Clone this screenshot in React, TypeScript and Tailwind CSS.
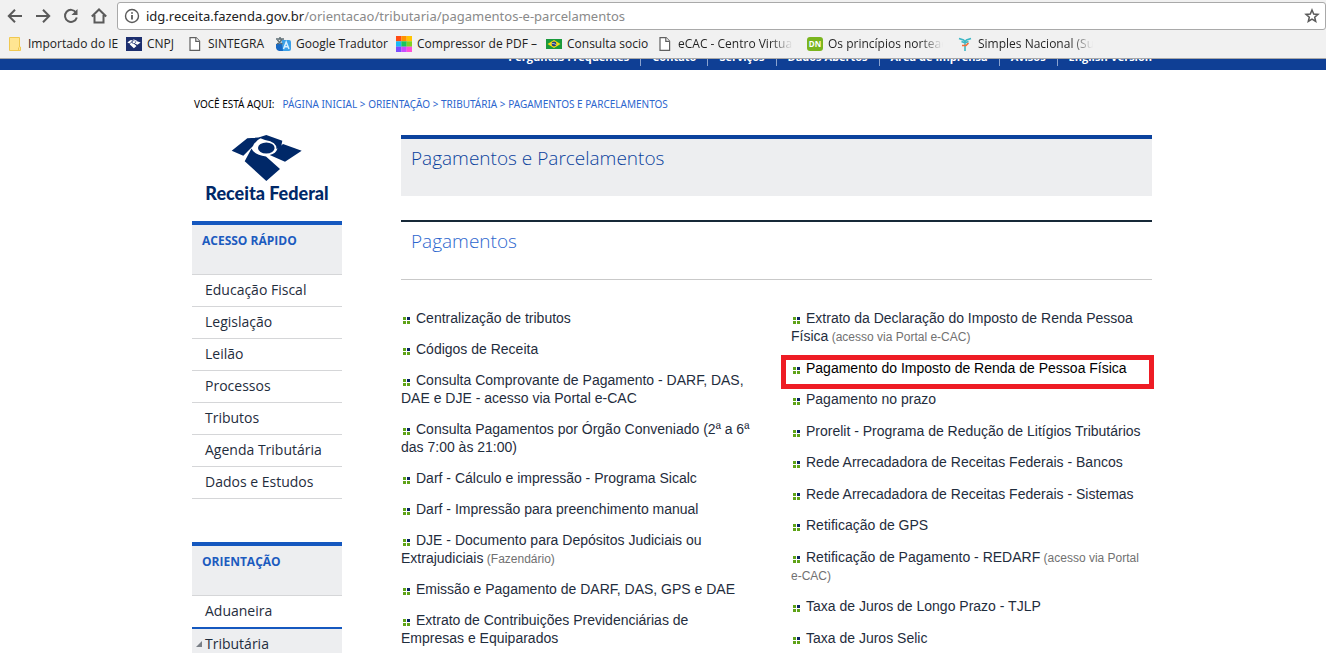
import type { ReactNode } from "react";

const sections = [
    "Perguntas Frequentes",
    "Contato",
    "Serviços",
    "Dados Abertos",
    "Área de Imprensa",
    "Avisos",
    "English Version",
];

const quickLinks = [
    "Educação Fiscal",
    "Legislação",
    "Leilão",
    "Processos",
    "Tributos",
    "Agenda Tributária",
    "Dados e Estudos",
];

type Service = { label: string; note?: string; highlighted?: boolean };

const leftServices: Service[] = [
    { label: "Centralização de tributos" },
    { label: "Códigos de Receita" },
    { label: "Consulta Comprovante de Pagamento - DARF, DAS, DAE e DJE - acesso via Portal e-CAC" },
    { label: "Consulta Pagamentos por Órgão Conveniado (2ª a 6ª das 7:00 às 21:00)" },
    { label: "Darf - Cálculo e impressão - Programa Sicalc" },
    { label: "Darf - Impressão para preenchimento manual" },
    { label: "DJE - Documento para Depósitos Judiciais ou Extrajudiciais", note: "(Fazendário)" },
    { label: "Emissão e Pagamento de DARF, DAS, GPS e DAE" },
    { label: "Extrato de Contribuições Previdenciárias de Empresas e Equiparados" },
];

const rightServices: Service[] = [
    { label: "Extrato da Declaração do Imposto de Renda Pessoa Física", note: "(acesso via Portal e-CAC)" },
    { label: "Pagamento do Imposto de Renda de Pessoa Física", highlighted: true },
    { label: "Pagamento no prazo" },
    { label: "Prorelit - Programa de Redução de Litígios Tributários" },
    { label: "Rede Arrecadadora de Receitas Federais - Bancos" },
    { label: "Rede Arrecadadora de Receitas Federais - Sistemas" },
    { label: "Retificação de GPS" },
    { label: "Retificação de Pagamento - REDARF", note: "(acesso via Portal e-CAC)" },
    { label: "Taxa de Juros de Longo Prazo - TJLP" },
    { label: "Taxa de Juros Selic" },
];

function ToolButton({ label, children }: { label: string; children: ReactNode }) {
    return (
        <button type="button" aria-label={label} className="flex size-4 items-center justify-center">
            <svg viewBox="0 0 16 16" className="size-4" fill="none" stroke="#5a5a5a" strokeWidth="2">
                {children}
            </svg>
        </button>
    );
}

function PageIcon() {
    return (
        <svg viewBox="0 0 16 16" className="size-4" fill="#fff" stroke="#5f5f5f" strokeWidth="1.2">
            <path d="M3 1.6h6l3.6 3.6v9.2H3z" />
            <path d="M8.800 1.600v3.800h3.800" />
        </svg>
    );
}

function FolderIcon() {
    return (
        <svg viewBox="0 0 16 16" className="size-4">
            <path d="M2.500 1.500h10v9.500h1v3.500h-11z" fill="#ffe592" stroke="#f0c850" />
            <path d="M11.500 11.500v3" stroke="#f0c850" />
        </svg>
    );
}

// The eagle emblem, shared by the site logo and the CNPJ bookmark.
function EagleShapes() {
    return (
        <>
            <path d="M.7 15.700L16.300 3.300 31 2.300Q24 6 22 11L12.300 20.700z" />
            <path d="M27.500 2.500L35.300 0l16 5.700-1.300 6.800-4.500 1.500Q46 7 34 5z" />
            <ellipse cx="35.300" cy="13" rx="8.300" ry="5.600" />
            <path d="M38.700 20Q45 18.500 46.500 13.500L52 9l18.700 6.700L54 26.700z" />
            <path d="M20.500 13.500Q23 20 35 21.500L49 34 35.300 46 13.700 26.300z" />
        </>
    );
}

function ReceitaIcon() {
    return (
        <svg viewBox="0 0 16 16" className="size-4">
            <path d="M0 1h16v14H0z" fill="#1d2f6f" />
            <g fill="#fff" transform="translate(1.200 3.600) scale(.19)">
                <EagleShapes />
            </g>
        </svg>
    );
}

function TranslateIcon() {
    return (
        <svg viewBox="0 0 16 16" className="size-4">
            <path d="M1 8l6-1 3 8H4a4 4 0 0 1-3-3z" fill="#1769c4" />
            <path d="M6.500 4H14a2 2 0 0 1 2 2v7a2 2 0 0 1-2 2H8z" fill="#3aa0e8" />
            <path d="M1 3h8M5 1v2M2 8c3-1 4-3 5-5M2.500 4c1 2 2 3 5 4" stroke="#5e6e74" strokeWidth="1.500" fill="none" />
            <path d="M8.500 13l2.700-7 2.800 7M9.500 10.800h3.500" stroke="#d9f0ff" strokeWidth="1.500" fill="none" />
        </svg>
    );
}

function CompressorIcon() {
    const tiles = [
        "#ff4b12", "#ff9100", "#ffc400",
        "#18b9f5", "#16c65c", "#7ed321",
        "#7c4dff", "#c84bff", "#ff4fd8",
    ];
    return (
        <svg viewBox="0 0 16 16" className="size-4">
            {tiles.map((fill, i) => (
                <rect key={fill} x={(i % 3) * 5.33} y={Math.floor(i / 3) * 5.33} width="5.400" height="5.400" fill={fill} />
            ))}
        </svg>
    );
}

function BrazilIcon() {
    return (
        <svg viewBox="0 0 16 16" className="size-4">
            <path d="M0 3h16v10H0z" fill="#1a9a3c" />
            <path d="M8 4l6.500 4L8 12 1.500 8z" fill="#f7d917" />
            <circle cx="8" cy="8" r="2.400" fill="#24407f" />
            <path d="M5.800 7.500q2.500-.3 4.300 1.200" stroke="#fff" strokeWidth=".6" fill="none" />
        </svg>
    );
}

function NormasIcon() {
    return (
        <span className="flex h-3.5 w-4 items-center justify-center rounded-[3px] bg-[#7ab51d] text-[8px] font-bold text-white">
            DN
        </span>
    );
}

function SimplesIcon() {
    return (
        <svg viewBox="0 0 16 16" className="size-4" fill="none">
            <path d="M2 2.500l4.500 1.500L8 5.500 9.500 4 14 2.500M4.500 5.500L8 7l3.500-1.500M8 5v10" stroke="#3bb6c4" strokeWidth="1.600" />
            <path d="M5 9.500h4l2.500-2.500" stroke="#f2703a" strokeWidth="1.600" />
        </svg>
    );
}

const bookmarks = [
    { label: "Importado do IE", icon: <FolderIcon />, width: "w-[119px]" },
    { label: "CNPJ", icon: <ReceitaIcon />, width: "w-[61px]" },
    { label: "SINTEGRA", icon: <PageIcon />, width: "w-[88px]" },
    { label: "Google Tradutor", icon: <TranslateIcon />, width: "w-[121px]" },
    { label: "Compressor de PDF –", icon: <CompressorIcon />, width: "w-[150px]" },
    { label: "Consulta socio", icon: <BrazilIcon />, width: "w-[111px]" },
    { label: "eCAC - Centro Virtual", icon: <PageIcon />, width: "w-[150px]", faded: true },
    { label: "Os princípios norteadores", icon: <NormasIcon />, width: "w-[150px]", faded: true },
    { label: "Simples Nacional (Super", icon: <SimplesIcon />, width: "w-[150px]", faded: true },
];

function BrowserChrome() {
    return (
        <header className="shrink-0 border-b border-[#a9a9a9] bg-[#f1f1f1]">
            <div className="flex items-center gap-2.5 pt-0.5 pl-[7px]">
                <div className="flex gap-3">
                    <ToolButton label="Voltar">
                        <path d="M15 8H2M8 1.800L1.800 8 8 14.200" />
                    </ToolButton>
                    <ToolButton label="Avançar">
                        <path d="M1 8h13M8 1.800L14.200 8 8 14.200" />
                    </ToolButton>
                    <ToolButton label="Recarregar">
                        <path d="M13 4.500A6 6 0 1 0 13.800 9.500" />
                        <path d="M14.500 1v6h-6z" fill="#5a5a5a" stroke="none" />
                    </ToolButton>
                    <ToolButton label="Página inicial">
                        <path d="M.8 8.500L8 1.500l7.200 7M3.500 7v7.500h9V7" />
                    </ToolButton>
                </div>
                <div className="flex h-7 min-w-0 flex-1 items-center gap-1.5 rounded-[3px] border border-[#a9a9a9] bg-white pr-[5px] pl-1.5">
                    <svg viewBox="0 0 16 16" className="size-4 shrink-0" fill="none" stroke="#5a5a5a" strokeWidth="1.400">
                        <circle cx="8" cy="8" r="6.500" />
                        <path d="M8 7v4.500M8 4.200v1.600" strokeWidth="1.800" />
                    </svg>
                    <a
                        href="#"
                        className="min-w-0 flex-1 truncate font-['Noto_Sans',sans-serif] text-[13px] leading-5 text-[#8a8a8a]"
                    >
                        <span className="text-[#222]">idg.receita.fazenda.gov.br</span>
                        /orientacao/tributaria/pagamentos-e-parcelamentos
                    </a>
                    <button type="button" aria-label="Adicionar aos favoritos">
                        <svg viewBox="0 0 16 16" className="size-4" fill="none" stroke="#5a5a5a" strokeWidth="1.500">
                            <path d="M8 2l1.700 4 4.300.4-3.300 2.800 1 4.300L8 11.200l-3.700 2.300 1-4.300L2 6.400 6.300 6z" />
                        </svg>
                    </button>
                </div>
            </div>
            <nav className="flex h-7 items-center pl-[7px]">
                {bookmarks.map(({ label, icon, width, faded }) => (
                    <a key={label} href="#" className={`flex shrink-0 items-center gap-[5px] text-xs text-[#222] ${width}`}>
                        <span className="flex size-4 shrink-0 items-center">{icon}</span>
                        <span
                            className={
                                faded
                                    ? "mr-3.5 overflow-hidden bg-linear-to-r from-[#222] from-80% to-transparent bg-clip-text whitespace-nowrap text-transparent"
                                    : "whitespace-nowrap"
                            }
                        >
                            {label}
                        </span>
                    </a>
                ))}
            </nav>
        </header>
    );
}

// Only the lower edge of the section menu shows under the browser bar.
function SectionBar() {
    return (
        <nav className="flex h-[11px] items-end overflow-hidden bg-[#0f3f95] pl-[18px]">
            <div className="mx-auto flex w-full max-w-[960px] justify-end pb-1">
                {sections.map((label) => (
                    <a
                        key={label}
                        href="#"
                        className="border-r border-[#8ba3cf] px-[11px] text-[11px] leading-[18px] font-bold text-white last:border-0 last:pr-0"
                    >
                        {label}
                    </a>
                ))}
            </div>
        </nav>
    );
}

function ReceitaLogo() {
    return (
        <a href="#" className="flex w-[150px] flex-col items-center text-[#002868]">
            <svg viewBox="0 0 72 48" className="h-12 w-[72px]" fill="currentColor">
                <EagleShapes />
            </svg>
            <span className="font-['Lato',sans-serif] text-[18px] leading-5 font-black whitespace-nowrap">
                Receita Federal
            </span>
        </a>
    );
}

function SidebarHeading({ children }: { children: ReactNode }) {
    return (
        <h2 className="h-[54px] border-t-4 border-b border-t-[#1558bf] border-b-[#d5d6d8] bg-[#edeef0] px-2.5 pt-1.5 text-xs leading-5 font-bold text-[#1c5bbf]">
            {children}
        </h2>
    );
}

function Sidebar() {
    return (
        <aside className="w-[150px] shrink-0">
            <ReceitaLogo />
            <section className="mt-[18px]">
                <SidebarHeading>ACESSO RÁPIDO</SidebarHeading>
                <ul>
                    {quickLinks.map((label) => (
                        <li key={label} className="border-b border-[#d5d6d8]">
                            <a href="#" className="block px-[13px] pb-0.5 text-sm leading-[29px] text-[#1f2d3d]">
                                {label}
                            </a>
                        </li>
                    ))}
                </ul>
            </section>
            <section className="mt-[43px]">
                <SidebarHeading>ORIENTAÇÃO</SidebarHeading>
                <ul className="text-sm leading-[29px] text-[#1f2d3d]">
                    <li>
                        <a href="#" className="block px-[13px] pb-0.5">
                            Aduaneira
                        </a>
                    </li>
                    <li className="border-t-2 border-[#1558bf] bg-[#edeef0]">
                        <a href="#" aria-current="page" className="flex items-center gap-[3px] pl-1 font-medium">
                            <svg viewBox="0 0 6 6" className="size-1.5" fill="#7b8087">
                                <path d="M6 0v6H0z" />
                            </svg>
                            Tributária
                        </a>
                    </li>
                </ul>
            </section>
        </aside>
    );
}

function Bullet() {
    return (
        <svg viewBox="0 0 7 7" className="mr-1.5 ml-0.5 inline-block size-[7px] align-[-1px]" shapeRendering="crispEdges">
            <path d="M0 0h3v3H0zM0 4h3v3H0zM4 4h3v3H4z" fill="#5fa318" />
            <path d="M4 0h3v3H4z" fill="#0b2567" />
        </svg>
    );
}

function ServiceList({ items }: { items: Service[] }) {
    return (
        <ul className="flex flex-col justify-between gap-[13px]">
            {items.map(({ label, note, highlighted }) => (
                <li key={label} className="relative">
                    <Bullet />
                    <a href="#" className={highlighted ? "text-black" : undefined}>
                        {label}
                    </a>
                    {note && <span className="text-xs leading-none text-[#717171]"> {note}</span>}
                    {highlighted && (
                        <span className="pointer-events-none absolute -top-1 -right-0.5 -bottom-3 -left-2.5 border-[5px] border-[#ee1c24]" />
                    )}
                </li>
            ))}
        </ul>
    );
}

function Content() {
    return (
        <main className="min-w-0 flex-1">
            <h1 className="h-[61px] border-t-4 border-[#0b429d] bg-[#edeef0] px-2.5 pt-1 text-[19px] leading-[30px] font-light text-[#0b429d]">
                Pagamentos e Parcelamentos
            </h1>
            <h2 className="mt-6 h-[60px] border-t-2 border-b border-t-[#172938] border-b-[#c9c9c9] px-2.5 pt-1 text-[19px] leading-[30px] font-light text-[#2c66ce]">
                Pagamentos
            </h2>
            <div className="mt-[29px] grid grid-cols-[352fr_361fr] gap-x-[38px] font-['Liberation_Sans',Arial,sans-serif] text-sm leading-[18px] text-[#1f2d3d]">
                <ServiceList items={leftServices} />
                <ServiceList items={rightServices} />
            </div>
        </main>
    );
}

export default function App() {
    return (
        <div className="flex h-screen flex-col overflow-hidden bg-white font-['Open_Sans',sans-serif]">
            <BrowserChrome />
            <div className="min-h-0 flex-1 overflow-hidden">
                <SectionBar />
                <div className="pl-[18px]">
                    <div className="mx-auto max-w-[960px]">
                        <nav className="flex gap-2 px-0.5 pt-6 font-['Noto_Sans',sans-serif] text-[10px] leading-5 text-[#2c66ce]">
                            <span className="text-black">VOCÊ ESTÁ AQUI:</span>
                            <span>
                                <a href="#">PÁGINA INICIAL</a> &gt; <a href="#">ORIENTAÇÃO</a> &gt;{" "}
                                <a href="#">TRIBUTÁRIA</a> &gt; <a href="#">PAGAMENTOS E PARCELAMENTOS</a>
                            </span>
                        </nav>
                        <div className="mt-[21px] flex gap-[59px]">
                            <Sidebar />
                            <Content />
                        </div>
                    </div>
                </div>
            </div>
        </div>
    );
}
